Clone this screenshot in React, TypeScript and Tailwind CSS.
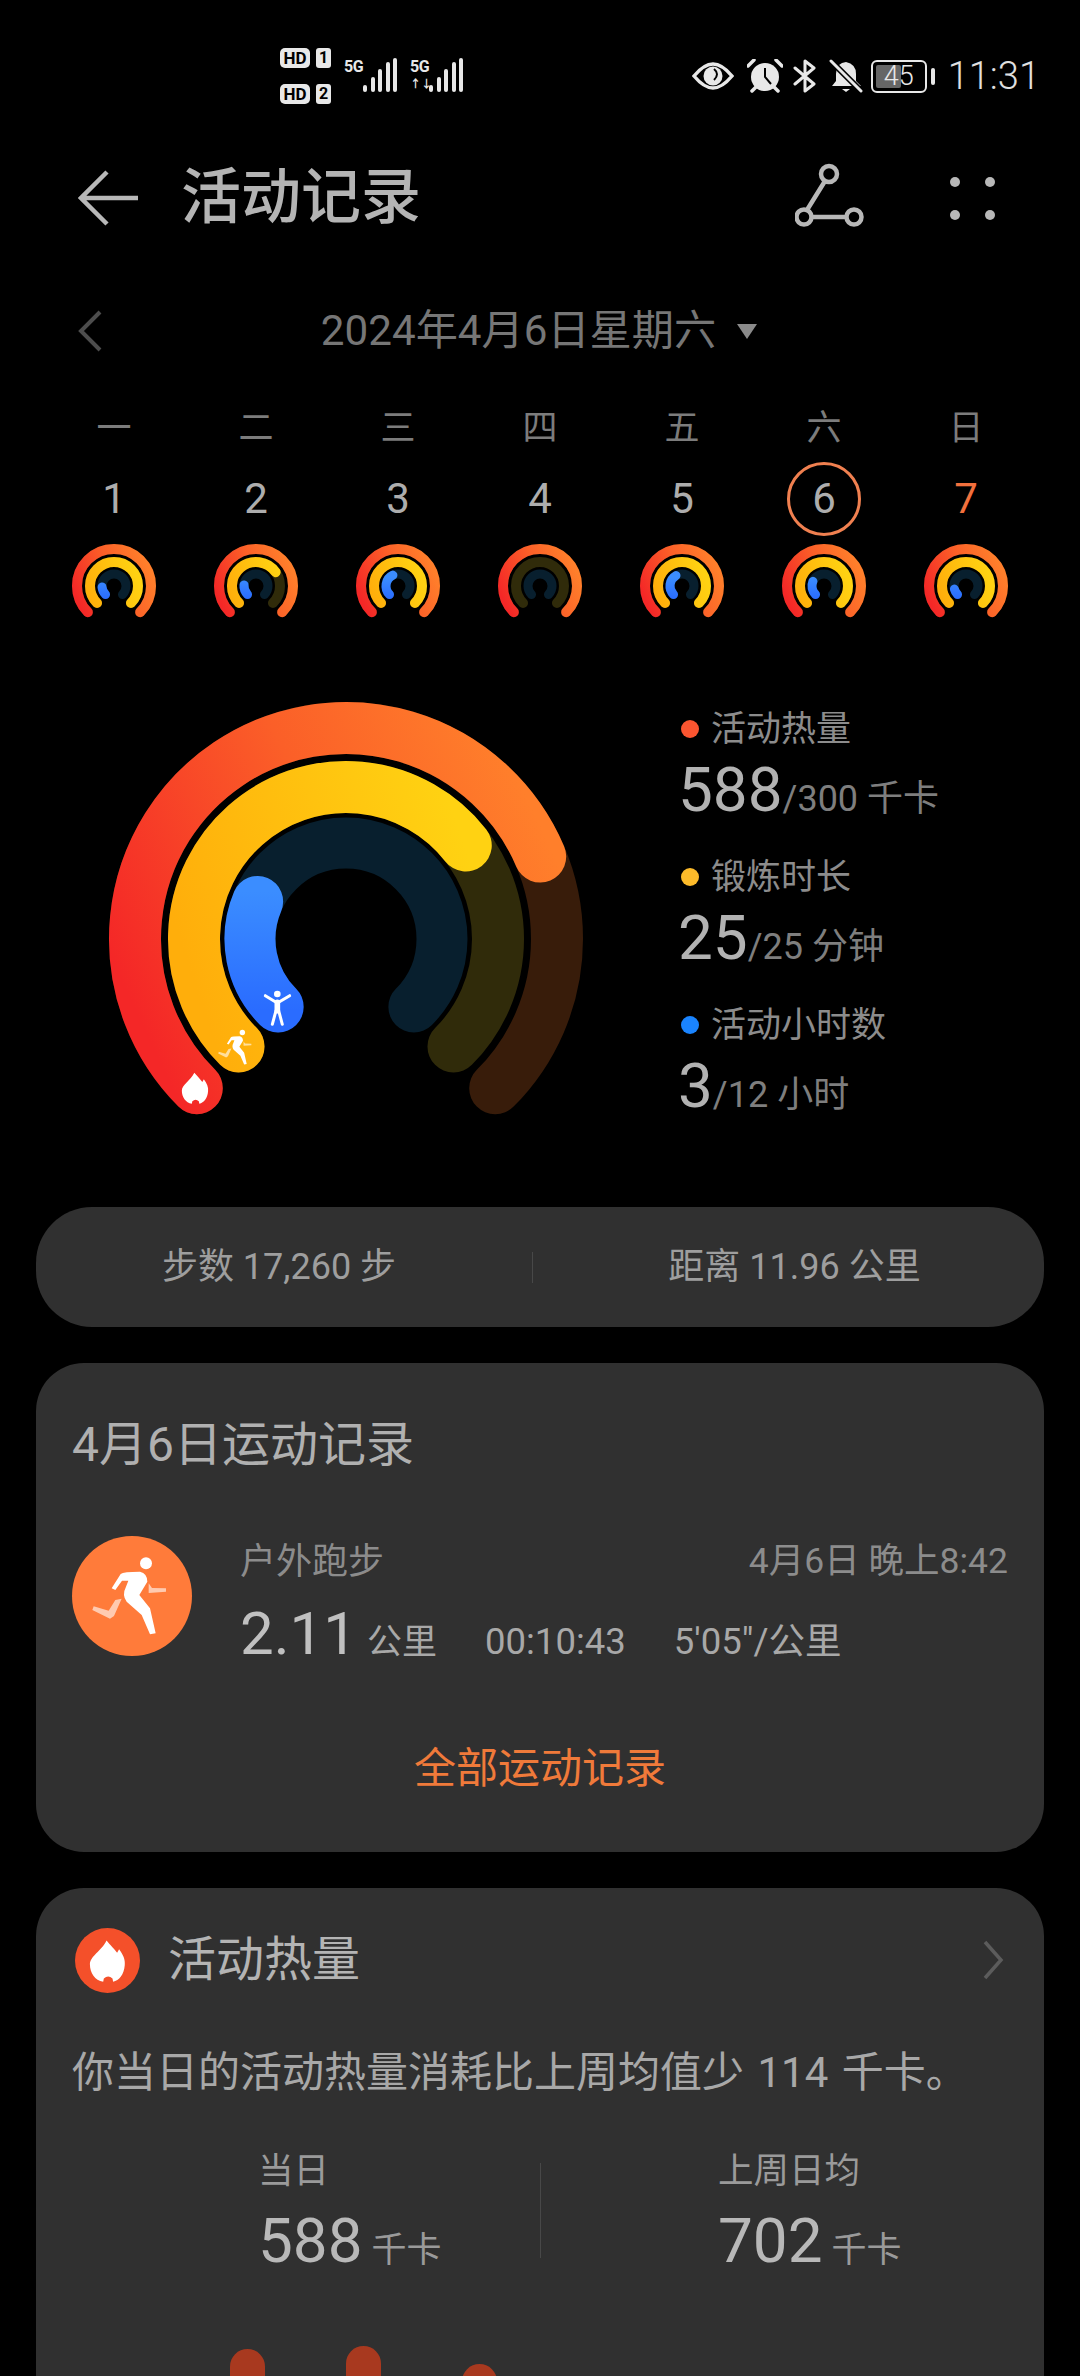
import { useId } from "react";

const FONT = "font-['Roboto','Noto_Sans_CJK_SC',sans-serif]";

function polar(r: number, deg: number) {
  const a = ((deg - 90) * Math.PI) / 180;
  return [r * Math.cos(a), r * Math.sin(a)];
}

function arc(r: number, from: number, to: number) {
  const [x1, y1] = polar(r, from);
  const [x2, y2] = polar(r, to);
  const large = to - from > 180 ? 1 : 0;
  return `M${x1.toFixed(2)} ${y1.toFixed(2)}A${r} ${r} 0 ${large} 1 ${x2.toFixed(2)} ${y2.toFixed(2)}`;
}

type Progress = { red: number; yellow: number | null; blue: number | null };

function RingArcs({ radii, widths, p, R }: { radii: number[]; widths: number[]; p: Progress; R: number }) {
  const id = useId();
  return (
    <>
      <defs>
        <linearGradient id={id + "r"} gradientUnits="userSpaceOnUse" x1={-R * 0.7} y1={R * 0.7} x2={R} y2={-R * 0.1}>
          <stop offset="0" stopColor="#f42727" />
          <stop offset="0.55" stopColor="#fb5f28" />
          <stop offset="1" stopColor="#ff7f2b" />
        </linearGradient>
        <linearGradient id={id + "y"} gradientUnits="userSpaceOnUse" x1={-R * 0.6} y1={R * 0.3} x2={R * 0.6} y2={-R * 0.1}>
          <stop offset="0" stopColor="#ffae0b" />
          <stop offset="1" stopColor="#ffd212" />
        </linearGradient>
        <linearGradient id={id + "b"} gradientUnits="userSpaceOnUse" x1="0" y1={-R * 0.2} x2="0" y2={R * 0.3}>
          <stop offset="0" stopColor="#3b8dff" />
          <stop offset="1" stopColor="#2a6cff" />
        </linearGradient>
      </defs>
      <g fill="none" strokeLinecap="round">
        <path d={arc(radii[0], -135, 135)} stroke="#381c0a" strokeWidth={widths[0]} />
        <path d={arc(radii[1], -135, 135)} stroke="#302b0a" strokeWidth={widths[1]} />
        <path d={arc(radii[2], -135, 135)} stroke="#081f2e" strokeWidth={widths[2]} />
        <path d={arc(radii[0], -135, p.red)} stroke={`url(#${id}r)`} strokeWidth={widths[0]} />
        {p.yellow !== null && <path d={arc(radii[1], -135, p.yellow)} stroke={`url(#${id}y)`} strokeWidth={widths[1]} />}
        {p.blue !== null && <path d={arc(radii[2], -135, p.blue)} stroke={`url(#${id}b)`} strokeWidth={widths[2]} />}
      </g>
    </>
  );
}

function Runner() {
  return (
    <>
      <circle cx="258" cy="130" r="18" fill="#fff" />
      <path
        d="M155 205L182 162Q190 155 240 155Q262 160 262 185L238 225L270 265L287 340L270 343L245 285L200 245Q185 225 198 200L205 182L186 182L166 210Z"
        fill="#fff"
      />
      <path d="M266 190L276 204L318 205L318 215L266 219Z" fill="#fff" fillOpacity="0.6" />
      <path d="M185 236L162 288L150 296L97 270L101 259L146 272L166 240Z" fill="#fff" fillOpacity="0.6" />
    </>
  );
}

const FLAME =
  "M140 58C150 70 165 85 172 95L178 84C190 100 197 115 195 132C193 160 178 178 160 182L158 172Q145 160 132 172L130 182C105 178 90 155 90 130C90 105 125 90 140 58Z";

function BigRing() {
  return (
    <svg width="480" height="425" viewBox="-240 -240 480 425" className="shrink-0">
      <RingArcs radii={[211, 152, 96]} widths={[52, 52, 51]} R={237} p={{ red: 67, yellow: 52, blue: -67 }} />
      <g transform="translate(-176 40) scale(0.3333)">
        <path d={FLAME} fill="#fff" transform="translate(-32 238) scale(0.75)" />
        <g transform="translate(101 102) scale(0.45)">
          <Runner />
        </g>
        <circle cx="322" cy="45" r="10" fill="#fff" />
        <g stroke="#fff" fill="none" strokeLinecap="round" strokeWidth="9">
          <path d="M286 50L322 72L359 50" />
          <path d="M322 70L322 95" strokeWidth="17" />
          <path d="M318 95L307 136M326 95L337 136" />
        </g>
      </g>
    </svg>
  );
}

const days: { week: string; day: number; p: Progress }[] = [
  { week: "一", day: 1, p: { red: 135, yellow: 135, blue: -95 } },
  { week: "二", day: 2, p: { red: 135, yellow: 55, blue: -85 } },
  { week: "三", day: 3, p: { red: 135, yellow: 135, blue: -25 } },
  { week: "四", day: 4, p: { red: 135, yellow: null, blue: null } },
  { week: "五", day: 5, p: { red: 135, yellow: 135, blue: -30 } },
  { week: "六", day: 6, p: { red: 135, yellow: 135, blue: -67 } },
  { week: "日", day: 7, p: { red: 135, yellow: 135, blue: -105 } },
];

function StatusBar() {
  const bars = [7, 15, 23, 30, 34];
  const Signal = () => (
    <div className="flex h-[34px] items-end gap-[3.5px]">
      {bars.map((h, i) => (
        <div key={i} className="w-[4px] rounded-full bg-[#e8e8e8]" style={{ height: h }} />
      ))}
    </div>
  );
  const Hd = ({ n }: { n: number }) => (
    <div className="flex items-center gap-[6px]">
      <div className="flex h-[20px] w-[30px] items-center justify-center rounded-[5px] bg-[#e8e8e8] text-[17px] leading-none font-bold text-black">
        HD
      </div>
      <div className="flex h-[20px] w-[15px] items-center justify-center rounded-[3px] bg-[#e8e8e8] text-[16px] leading-none font-bold text-black">
        {n}
      </div>
    </div>
  );
  return (
    <div className="flex h-[114px] items-center justify-between pt-[38px] pr-[40px] pl-[280px]">
      <div className="flex items-center">
        <div className="flex flex-col gap-[16px]">
          <Hd n={1} />
          <Hd n={2} />
        </div>
        <div className="mb-[2px] ml-[13px] flex items-start">
          <span className="text-[16px] leading-[18px] font-bold tracking-[-0.5px] text-[#e8e8e8]">5G</span>
          <Signal />
        </div>
        <div className="relative mb-[2px] ml-[13px] flex items-start">
          <span className="text-[16px] leading-[18px] font-bold tracking-[-0.5px] text-[#e8e8e8]">5G</span>
          <span className="absolute top-[21px] left-0 text-[11px] leading-[12px] font-bold text-[#e8e8e8]">↑↓</span>
          <Signal />
        </div>
      </div>
      <div className="flex items-center">
        <svg width="42" height="28" viewBox="0 0 42 28">
          <path d="M2 14Q12 2 21 2Q30 2 40 14Q30 26 21 26Q12 26 2 14Z" fill="none" stroke="#e8e8e8" strokeWidth="3.5" />
          <circle cx="21" cy="14" r="9.5" fill="#e8e8e8" />
          <path d="M22 7Q28 12 22 18" fill="none" stroke="#000" strokeWidth="2" />
        </svg>
        <svg width="36" height="34" viewBox="0 0 36 34" className="ml-[13px]">
          <circle cx="18" cy="18" r="14" fill="#e8e8e8" />
          <path d="M18 9V18L24 25" fill="none" stroke="#000" strokeWidth="2" />
          <path d="M1 7L7 1M35 7L29 1M5 32L9 28M31 32L27 28" stroke="#e8e8e8" strokeWidth="3.5" strokeLinecap="round" />
        </svg>
        <svg width="24" height="34" viewBox="0 0 24 34" className="ml-[10px]">
          <path d="M2 9L21 25L12 32V2L21 9L2 25" fill="none" stroke="#e8e8e8" strokeWidth="3" strokeLinejoin="round" strokeLinecap="round" />
        </svg>
        <svg width="34" height="34" viewBox="0 0 34 34" className="ml-[12px]">
          <path d="M17 3Q27 5 27 15V22L32 27H3L7 22V15Q7 7 13 4Z" fill="#e8e8e8" />
          <path d="M13 30H21L17 33Z" fill="#e8e8e8" />
          <path d="M2 2L32 32" stroke="#000" strokeWidth="6" />
          <path d="M2 2L32 32" stroke="#e8e8e8" strokeWidth="3" strokeLinecap="round" />
        </svg>
        <div className="ml-[8px] flex h-[33px] w-[56px] items-center rounded-[6px] border-[2.5px] border-[#e8e8e8] p-[3px]">
          <div className="relative h-full w-full">
            <div className="h-full w-[55%] rounded-[2px] bg-[#666]" />
            <span className="absolute inset-0 flex items-center justify-center text-[27px] leading-none font-light text-[#e8e8e8]">
              45
            </span>
          </div>
        </div>
        <div className="ml-[4px] h-[17px] w-[4px] rounded-full bg-[#e8e8e8]" />
        <span className="ml-[13px] text-[38px] leading-none font-light text-[#e0e0e0]">11:31</span>
      </div>
    </div>
  );
}

function TitleBar() {
  return (
    <div className="flex h-[168px] items-center pr-[85px] pl-[78px]">
      <svg width="60" height="56" viewBox="0 0 60 56" className="shrink-0">
        <path d="M29 2L3 28L29 54M3 28H60" fill="none" stroke="#b8b8b8" strokeWidth="4.5" />
      </svg>
      <h1 className="ml-[43px] flex-1 text-[60px] leading-none font-medium text-[#b4b4b4]">活动记录</h1>
      <svg width="70" height="70" viewBox="0 0 70 70" className="mr-[85px] shrink-0" fill="none" stroke="#b8b8b8" strokeWidth="4.5">
        <circle cx="34" cy="11" r="8" />
        <circle cx="9" cy="54" r="7.5" />
        <circle cx="59" cy="54" r="7.5" />
        <path d="M30 18L12 47M17 54H51" />
      </svg>
      <div className="grid shrink-0 grid-cols-2 gap-x-[25px] gap-y-[23px]">
        <div className="h-[10px] w-[10px] rounded-full bg-[#b8b8b8]" />
        <div className="h-[10px] w-[10px] rounded-full bg-[#b8b8b8]" />
        <div className="h-[10px] w-[10px] rounded-full bg-[#b8b8b8]" />
        <div className="h-[10px] w-[10px] rounded-full bg-[#b8b8b8]" />
      </div>
    </div>
  );
}

function Calendar() {
  return (
    <>
      <div className="relative flex h-[98px] items-center justify-center pr-[2px]">
        <svg width="24" height="42" viewBox="0 0 24 42" className="absolute top-[28px] left-[78px]">
          <path d="M22 2L3 21L22 40" fill="none" stroke="#4d4d4d" strokeWidth="4" />
        </svg>
        <span className="text-[42.2px] leading-none text-[#767676]">2024年4月6日星期六</span>
        <div className="ml-[21px] h-0 w-0 border-t-[15px] border-r-[10px] border-l-[10px] border-t-[#8a8a8a] border-r-transparent border-l-transparent" />
      </div>
      <div className="grid grid-cols-7 px-[43px] pt-[18px]">
        {days.map((d) => (
          <div key={d.day} className="flex flex-col items-center">
            <div className="flex h-[60px] items-center text-[35px] leading-none text-[#7c7c7c]">{d.week}</div>
            <div
              className={`mt-[4px] flex h-[74px] w-[74px] items-center justify-center rounded-full text-[42px] leading-none ${
                d.day === 6 ? "border-[3px] border-[#f08050]" : ""
              } ${d.day === 7 ? "text-[#f2703d]" : "text-[#adadad]"}`}
            >
              {d.day}
            </div>
            <svg width="90" height="84" viewBox="-45 -45 90 84" className="mt-[5px]">
              <RingArcs radii={[37, 24, 12]} widths={[10, 10, 9]} R={42} p={d.p} />
            </svg>
          </div>
        ))}
      </div>
    </>
  );
}

function Legend({ color, label, value, goal, unit }: { color: string; label: string; value: number; goal: number; unit: string }) {
  return (
    <div>
      <div className="flex h-[40px] items-center pl-[3px]">
        <div className={`h-[18px] w-[18px] rounded-full ${color}`} />
        <span className="ml-[12px] text-[35px] leading-none text-[#8c8c8c]">{label}</span>
      </div>
      <div className="flex h-[82px] items-baseline pt-[10px]">
        <span className="text-[62px] leading-[62px] text-[#b2b2b2]">{value}</span>
        <span className="text-[36px] leading-none text-[#7e7e7e]">
          /{goal} {unit}
        </span>
      </div>
    </div>
  );
}

function SummaryRings() {
  return (
    <div className="mt-[74px] flex pl-[106px]">
      <BigRing />
      <div className="ml-[92px] flex flex-col gap-[26px] pt-[10px]">
        <Legend color="bg-[#fb5530]" label="活动热量" value={588} goal={300} unit="千卡" />
        <Legend color="bg-[#fdbb2a]" label="锻炼时长" value={25} goal={25} unit="分钟" />
        <Legend color="bg-[#1a84ff]" label="活动小时数" value={3} goal={12} unit="小时" />
      </div>
    </div>
  );
}

function Steps() {
  return (
    <div className="mx-[36px] mt-[80px] flex h-[120px] items-center rounded-[56px] bg-[#303030] text-[36px] leading-none text-[#9e9e9e]">
      <div className="w-[496px] pr-[10px] text-center">步数 17,260 步</div>
      <div className="h-[31px] w-px bg-[#484848]" />
      <div className="flex-1 pl-[12px] text-center">距离 11.96 公里</div>
    </div>
  );
}

function WorkoutCard() {
  return (
    <div className="mx-[36px] mt-[36px] h-[489px] rounded-[48px] bg-[#303030] px-[36px] pt-[54px]">
      <div className="flex h-[56px] items-center text-[48px] leading-none text-[#b0b0b0]">4月6日运动记录</div>
      <div className="mt-[63px] flex items-start">
        <svg width="120" height="120" viewBox="36 48 360 360" className="shrink-0">
          <circle cx="216" cy="228" r="180" fill="#ff7b3a" />
          <Runner />
        </svg>
        <div className="ml-[48px] flex-1">
          <div className="flex h-[52px] items-center justify-between text-[36px] leading-none text-[#8c8c8c]">
            <span>户外跑步</span>
            <span className="text-[35.5px]">4月6日 晚上8:42</span>
          </div>
          <div className="flex h-[92px] items-baseline pt-[16px] text-[36.5px] leading-none text-[#a8a8a8]">
            <span className="text-[60px] leading-[60px] text-[#c0c0c0]">2.11</span>
            <span className="ml-[10px] text-[35px]">公里</span>
            <span className="ml-[48px]">00:10:43</span>
            <span className="ml-[48px]">5'05"/公里</span>
          </div>
        </div>
      </div>
      <div className="mt-[59px] flex h-[60px] items-center justify-center text-[42px] leading-none text-[#f07a3a]">全部运动记录</div>
    </div>
  );
}

function CalorieStat({ label, value }: { label: string; value: number }) {
  return (
    <>
      <div className="flex h-[44px] items-center text-[35.5px] leading-none text-[#9a9a9a]">{label}</div>
      <div className="flex h-[88px] items-baseline pt-[16px]">
        <span className="text-[62px] leading-[62px] text-[#b8b8b8]">{value}</span>
        <span className="ml-[9px] text-[35px] leading-none text-[#9a9a9a]">千卡</span>
      </div>
    </>
  );
}

function CalorieCard() {
  return (
    <div className="mx-[36px] mt-[36px] h-[600px] rounded-[48px] bg-[#303030] px-[36px] pt-[40px]">
      <div className="flex h-[64px] items-center">
        <svg width="65" height="65" viewBox="45 20 196 196" className="ml-[3px] shrink-0">
          <circle cx="143" cy="118" r="98" fill="#f4502a" />
          <path d={FLAME} fill="#fff" />
        </svg>
        <span className="ml-[28px] flex-1 text-[48px] leading-none text-[#b4b4b4]">活动热量</span>
        <svg width="22" height="40" viewBox="0 0 22 40" className="mr-[4px] shrink-0">
          <path d="M3 2L19 20L3 38" fill="none" stroke="#5c5c5c" strokeWidth="3.5" />
        </svg>
      </div>
      <div className="mt-[51px] flex h-[60px] items-center text-[42px] leading-none whitespace-pre [word-spacing:3px] text-[#a8a8a8]">
        你当日的活动热量消耗比上周均值少 114 千卡。
      </div>
      <div className="mt-[47px] flex items-start">
        <div className="w-[468px] pl-[186px]">
          <CalorieStat label="当日" value={588} />
        </div>
        <div className="mt-[13px] h-[95px] w-px bg-[#484848]" />
        <div className="pl-[177px]">
          <CalorieStat label="上周日均" value={702} />
        </div>
      </div>
      <div className="mt-[64px] flex gap-[81px] pl-[158px]">
        <div className="mt-[3px] h-[60px] w-[35px] rounded-t-full bg-[#a8391f]" />
        <div className="h-[60px] w-[35px] rounded-t-full bg-[#a8391f]" />
        <div className="mt-[18px] h-[60px] w-[35px] rounded-t-full bg-[#a8391f]" />
      </div>
    </div>
  );
}

export default function App() {
  return (
    <div className={`h-[2376px] w-[1080px] overflow-hidden bg-black ${FONT}`}>
      <StatusBar />
      <TitleBar />
      <Calendar />
      <SummaryRings />
      <Steps />
      <WorkoutCard />
      <CalorieCard />
    </div>
  );
}
